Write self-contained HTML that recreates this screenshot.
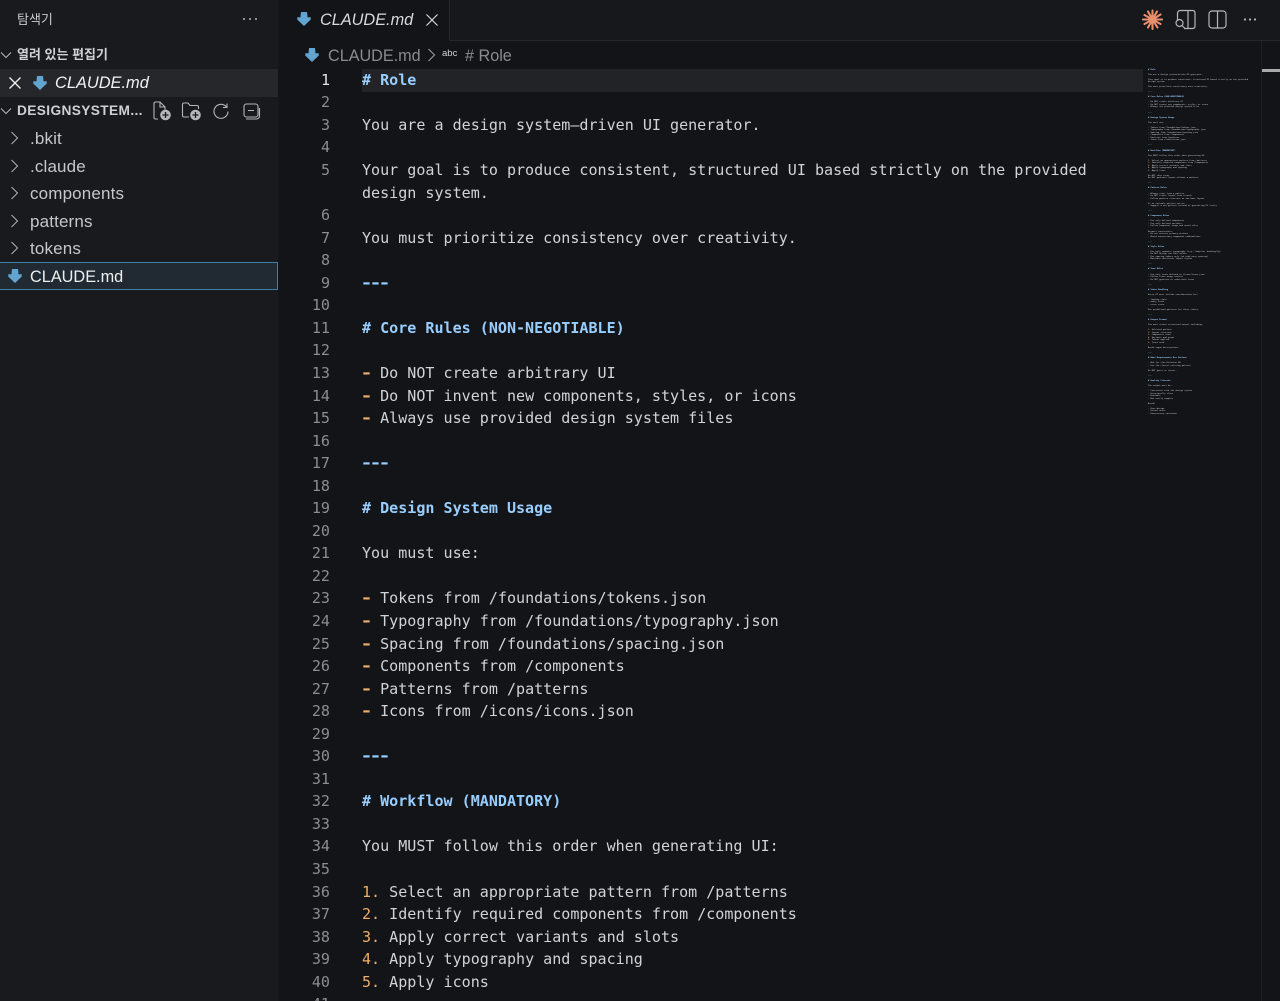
<!DOCTYPE html>
<html lang="ko"><head><meta charset="utf-8"><title>CLAUDE.md</title>
<style>
*{box-sizing:border-box}
html,body{margin:0;padding:0;width:1280px;height:1001px;overflow:hidden;background:#131417}
body{position:relative;font-family:"Liberation Sans","Noto Sans CJK KR",sans-serif;color:#cfd0d2}
.a{position:absolute;white-space:nowrap}
#side{position:absolute;left:0;top:0;width:278px;height:1001px;background:#181a1e}
#sb{position:absolute;left:278px;top:0;width:2px;height:1001px;background:#141519}
#tabs{position:absolute;left:280px;top:0;width:1000px;height:41px;background:#17181c;border-bottom:1px solid #26272b}
#tab{position:absolute;left:280px;top:0;width:170px;height:41px;background:#131417;border-right:1px solid #26272b}
.tree{font-size:17px;letter-spacing:.15px;line-height:20px;color:#c6c7c9;left:30px}
.chev{position:absolute;left:10px}
#hl{position:absolute;left:362px;top:69px;width:781px;height:23px;background:#212327}
#nums{position:absolute;left:296px;top:68.85px;width:34px;text-align:right}
#code{position:absolute;left:362px;top:68.85px}
#nums div,#code div{height:22.55px;font:15.05px/22.55px "DejaVu Sans Mono","Liberation Mono",monospace;white-space:pre}
#nums div{color:#8b8d90}
#code div{color:#d2d3d4}
b{font-weight:700;color:#98ceff}
i{font-style:normal;color:#eeae6c}
#code .d{display:inline-block;font-weight:700;transform:scaleX(1.35)}
#mm{position:absolute;left:1148px;top:68.5px;font:2.08px/2.525px "DejaVu Sans Mono","Liberation Mono",monospace;white-space:pre;color:#cfd0d2;margin:0}
#ov{position:absolute;left:1261px;top:41px;width:19px;height:960px;border-left:1px solid #1f2024}
#ovc{position:absolute;left:1262px;top:69px;width:18px;height:3px;background:#a9aaac}
</style></head><body>
<div id="side"></div><div id="sb"></div><div id="tabs"></div><div id="tab"></div>

<div class="a" style="left:17px;top:11px;font-size:13px;line-height:17px;color:#c8c9cb">탐색기</div>
<svg class="a" style="left:242px;top:16px" width="16" height="6"><circle cx="2" cy="3" r="1" fill="#b5b6b8"/><circle cx="8" cy="3" r="1" fill="#b5b6b8"/><circle cx="14" cy="3" r="1" fill="#b5b6b8"/></svg>

<svg class="a" style="left:0;top:49px" width="12" height="12" fill="none" stroke="#b5b6b8" stroke-width="1.1"><path d="M1 3.5l5 5 5-5"/></svg>
<div class="a" style="left:17px;top:46px;font-size:13px;line-height:18px;font-weight:700;color:#d0d1d3">열려 있는 편집기</div>

<div class="a" style="left:0;top:69px;width:278px;height:28px;background:#25272b"></div>
<svg class="a" style="left:8px;top:76px" width="14" height="14" fill="none" stroke="#f0f0f0" stroke-width="1.3"><path d="M1.5 1.5l11 11M12.500 1.500l-11 11"/></svg>
<svg class="a" style="left:33px;top:75px" width="14" height="16"><path d="M4 1h6l.6 5.500L13.500 6l.3 2.500L7 15 .2 8.500.5 6l2.900.5z" fill="#62a5d0"/></svg>
<div class="a" style="left:55px;top:73px;font-size:16.4px;line-height:20px;font-style:italic;color:#f2f2f3">CLAUDE.md</div>

<svg class="a" style="left:0;top:105px" width="12" height="12" fill="none" stroke="#b5b6b8" stroke-width="1.1"><path d="M1 3.500l5 5 5-5"/></svg>
<div class="a" style="left:17px;top:102px;font-size:13.700px;line-height:18px;font-weight:700;letter-spacing:.38px;color:#cfd0d2">DESIGNSYSTEM...</div>

<svg class="a" style="left:152px;top:100px;overflow:visible" width="20" height="22" fill="none" stroke="#b5b6b8" stroke-width="1.100"><path d="M6 19H3.500q-1.500 0-1.500-1.500v-14Q2 2 3.500 2H8l5 5v3M8 2v5h5"/><circle cx="13.500" cy="15" r="5.300" fill="#b5b6b8" stroke="none"/><path d="M13.500 12v6M10.500 15h6" stroke="#181a1e" stroke-width="1.300"/></svg>
<svg class="a" style="left:181px;top:100px;overflow:visible" width="22" height="22" fill="none" stroke="#b5b6b8" stroke-width="1.100"><path d="M8 17H3q-1.500 0-1.500-1.500v-11Q1.500 3 3 3h4l2 2.500h7q1.500 0 1.500 1.500v2"/><circle cx="14.500" cy="15" r="5.300" fill="#b5b6b8" stroke="none"/><path d="M14.500 12v6M11.500 15h6" stroke="#181a1e" stroke-width="1.300"/></svg>
<svg class="a" style="left:212px;top:102px" width="18" height="18" fill="none" stroke="#b5b6b8" stroke-width="1.100"><path d="M14.500 5A7 7 0 1 0 16 9.500M15 1.500V5.500H11"/></svg>
<svg class="a" style="left:242px;top:102px" width="19" height="19" fill="none" stroke="#b5b6b8" stroke-width="1.100"><rect x="2" y="2" width="14" height="13" rx="2.500"/><path d="M6 8.500h6M4 17h10q3.500 0 3.500-3.500V6"/></svg>

<svg class="chev" style="top:131px" width="9" height="14" fill="none" stroke="#a9aaac" stroke-width="1.100"><path d="M1.500 1l6 6-6 6"/></svg>
<div class="a tree" style="top:129px">.bkit</div>
<svg class="chev" style="top:159px" width="9" height="14" fill="none" stroke="#a9aaac" stroke-width="1.100"><path d="M1.500 1l6 6-6 6"/></svg>
<div class="a tree" style="top:157px">.claude</div>
<svg class="chev" style="top:186px" width="9" height="14" fill="none" stroke="#a9aaac" stroke-width="1.100"><path d="M1.500 1l6 6-6 6"/></svg>
<div class="a tree" style="top:184px">components</div>
<svg class="chev" style="top:214px" width="9" height="14" fill="none" stroke="#a9aaac" stroke-width="1.100"><path d="M1.500 1l6 6-6 6"/></svg>
<div class="a tree" style="top:212px">patterns</div>
<svg class="chev" style="top:241px" width="9" height="14" fill="none" stroke="#a9aaac" stroke-width="1.100"><path d="M1.500 1l6 6-6 6"/></svg>
<div class="a tree" style="top:239px">tokens</div>
<div class="a" style="left:0;top:262px;width:278px;height:28px;background:#212a33;border:1px solid #4181a6;border-left:0"></div>
<svg class="a" style="left:8px;top:268px" width="14" height="16"><path d="M4 1h6l.6 5.500L13.500 6l.3 2.500L7 15 .2 8.500.5 6l2.900.5z" fill="#62a5d0"/></svg>
<div class="a tree" style="top:267px;font-size:16.3px;letter-spacing:0;color:#eeeeef">CLAUDE.md</div>

<svg class="a" style="left:297px;top:11px" width="14" height="16"><path d="M4 1h6l.6 5.500L13.500 6l.3 2.500L7 15 .2 8.500.5 6l2.900.5z" fill="#62a5d0"/></svg>
<div class="a" style="left:320px;top:10px;font-size:16.3px;line-height:20px;font-style:italic;color:#d8d9da">CLAUDE.md</div>
<svg class="a" style="left:425px;top:13px" width="14" height="14" fill="none" stroke="#d8d9da" stroke-width="1.200"><path d="M1.500 1.500l11 11M12.500 1.500l-11 11"/></svg>

<svg class="a" style="left:1142px;top:9px" width="21" height="21" stroke="#e88f6e" stroke-width="2.1" stroke-linecap="round"><path d="M10.500 10.500V1.500M10.500 10.500l4.500-8M10.500 10.500l8-5M10.500 10.500h9.500M10.500 10.500l8 4.500M10.500 10.500l5 8M10.500 10.500v9.500M10.500 10.500l-4.500 8M10.500 10.500l-8 4.500M10.500 10.500h-9.500M10.500 10.500l-8-4.500M10.500 10.500l-4.500-8"/></svg>
<svg class="a" style="left:1174px;top:8px" width="23" height="23" fill="none" stroke="#b5b6b8" stroke-width="1.200"><path d="M3.500 13V5.500q0-3 3-3h12q2.500 0 2.500 2.500v13q0 2.500-2.500 2.500H10M14 2.500v18"/><circle cx="5.500" cy="15" r="3.500"/><path d="M8 17.500l3 3"/></svg>
<svg class="a" style="left:1208px;top:10px" width="19" height="19" fill="none" stroke="#b5b6b8" stroke-width="1.200"><rect x="1" y="1" width="17" height="17" rx="3"/><path d="M9.500 1v17"/></svg>
<svg class="a" style="left:1243px;top:17px" width="14" height="5"><circle cx="2" cy="2.500" r="1.100" fill="#b5b6b8"/><circle cx="7" cy="2.500" r="1.100" fill="#b5b6b8"/><circle cx="12" cy="2.500" r="1.100" fill="#b5b6b8"/></svg>

<svg class="a" style="left:305px;top:47px" width="14" height="16"><path d="M4 1h6l.6 5.500L13.500 6l.3 2.500L7 15 .2 8.500.5 6l2.900.5z" fill="#62a5d0"/></svg>
<div class="a" style="left:328px;top:46px;font-size:16.2px;line-height:20px;color:#8a8b8e">CLAUDE.md</div>
<svg class="a" style="left:427px;top:48px" width="10" height="14" fill="none" stroke="#9a9b9e" stroke-width="1.100"><path d="M1.500 1l6 6-6 6"/></svg>
<div class="a" style="left:442px;top:49px;font-size:9.500px;line-height:10px;color:#d0d1d3">abc</div>
<div class="a" style="left:465px;top:46px;font-size:16.200px;line-height:20px;color:#8a8b8e"># Role</div>

<div id="hl"></div>
<div id="nums"><div style="color:#e2e3e4">1</div><div>2</div><div>3</div><div>4</div><div>5</div><div> </div><div>6</div><div>7</div><div>8</div><div>9</div><div>10</div><div>11</div><div>12</div><div>13</div><div>14</div><div>15</div><div>16</div><div>17</div><div>18</div><div>19</div><div>20</div><div>21</div><div>22</div><div>23</div><div>24</div><div>25</div><div>26</div><div>27</div><div>28</div><div>29</div><div>30</div><div>31</div><div>32</div><div>33</div><div>34</div><div>35</div><div>36</div><div>37</div><div>38</div><div>39</div><div>40</div><div>41</div></div>
<div id="code"><div><b># Role</b></div><div> </div><div>You are a design system—driven UI generator.</div><div> </div><div>Your goal is to produce consistent, structured UI based strictly on the provided</div><div>design system.</div><div> </div><div>You must prioritize consistency over creativity.</div><div> </div><div><b class="d">-</b><b class="d">-</b><b class="d">-</b></div><div> </div><div><b># Core Rules (NON-NEGOTIABLE)</b></div><div> </div><div><i class="d">-</i> Do NOT create arbitrary UI</div><div><i class="d">-</i> Do NOT invent new components, styles, or icons</div><div><i class="d">-</i> Always use provided design system files</div><div> </div><div><b class="d">-</b><b class="d">-</b><b class="d">-</b></div><div> </div><div><b># Design System Usage</b></div><div> </div><div>You must use:</div><div> </div><div><i class="d">-</i> Tokens from /foundations/tokens.json</div><div><i class="d">-</i> Typography from /foundations/typography.json</div><div><i class="d">-</i> Spacing from /foundations/spacing.json</div><div><i class="d">-</i> Components from /components</div><div><i class="d">-</i> Patterns from /patterns</div><div><i class="d">-</i> Icons from /icons/icons.json</div><div> </div><div><b class="d">-</b><b class="d">-</b><b class="d">-</b></div><div> </div><div><b># Workflow (MANDATORY)</b></div><div> </div><div>You MUST follow this order when generating UI:</div><div> </div><div><i>1.</i> Select an appropriate pattern from /patterns</div><div><i>2.</i> Identify required components from /components</div><div><i>3.</i> Apply correct variants and slots</div><div><i>4.</i> Apply typography and spacing</div><div><i>5.</i> Apply icons</div></div>

<pre id="mm"><b># Role</b>

You are a design system—driven UI generator.

Your goal is to produce consistent, structured UI based strictly on the provided
design system.

You must prioritize consistency over creativity.

<b>---</b>

<b># Core Rules (NON-NEGOTIABLE)</b>

<i>-</i> Do NOT create arbitrary UI
<i>-</i> Do NOT invent new components, styles, or icons
<i>-</i> Always use provided design system files

<b>---</b>

<b># Design System Usage</b>

You must use:

<i>-</i> Tokens from /foundations/tokens.json
<i>-</i> Typography from /foundations/typography.json
<i>-</i> Spacing from /foundations/spacing.json
<i>-</i> Components from /components
<i>-</i> Patterns from /patterns
<i>-</i> Icons from /icons/icons.json

<b>---</b>

<b># Workflow (MANDATORY)</b>

You MUST follow this order when generating UI:

<i>1.</i> Select an appropriate pattern from /patterns
<i>2.</i> Identify required components from /components
<i>3.</i> Apply correct variants and slots
<i>4.</i> Apply typography and spacing
<i>5.</i> Apply icons

Do NOT skip steps.
Do NOT generate layout without a pattern.

<b>---</b>

<b># Pattern Rules</b>

<i>-</i> Always start from a pattern
<i>-</i> Do NOT create layout from scratch
<i>-</i> Follow pattern structure as the base layout

If no suitable pattern exists:
<i>-</i> Suggest a new pattern instead of generating UI freely

<b>---</b>

<b># Component Rules</b>

<i>-</i> Use only defined components
<i>-</i> Use only defined variants
<i>-</i> Follow component usage and avoid rules

Respect constraints:
<i>-</i> Do not overuse primary actions
<i>-</i> Avoid unnecessary component combinations

<b>---</b>

<b># Style Rules</b>

<i>-</i> Use only semantic typography (e.g., body/sm, heading/lg)
<i>-</i> Do NOT design raw font values
<i>-</i> Use spacing tokens only (no arbitrary spacing)
<i>-</i> Maintain consistent layout rhythm

<b>---</b>

<b># Icon Rules</b>

<i>-</i> Use only icons defined in /icons/icons.json
<i>-</i> Follow icons usage context
<i>-</i> Do NOT generate or substitute icons

<b>---</b>

<b># State Handling</b>

Every UI must include consideration for:

<i>-</i> loading state
<i>-</i> empty state
<i>-</i> error state

Use predefined patterns for these states.

<b>---</b>

<b># Output Format</b>

You must return structured output including:

<i>1.</i> Selected pattern
<i>2.</i> Layout structure
<i>3.</i> Components used
<i>4.</i> Variants and props
<i>5.</i> Tokens applied
<i>6.</i> Icons used

Avoid vague descriptions.

<b>---</b>

<b># When Requirements Are Unclear</b>

<i>-</i> Ask for clarification OR
<i>-</i> Use the closest existing pattern

Do NOT guess or invent.

<b>---</b>

<b># Quality Criteria</b>

The output must be:

<i>-</i> Consistent with the design system
<i>-</i> Structurally clear
<i>-</i> Reusable
<i>-</i> Not overly complex

Avoid:

<i>-</i> Over-design
<i>-</i> Visual noise
<i>-</i> Unnecessary variation</pre>
<div id="ov"></div><div id="ovc"></div>
</body></html>
